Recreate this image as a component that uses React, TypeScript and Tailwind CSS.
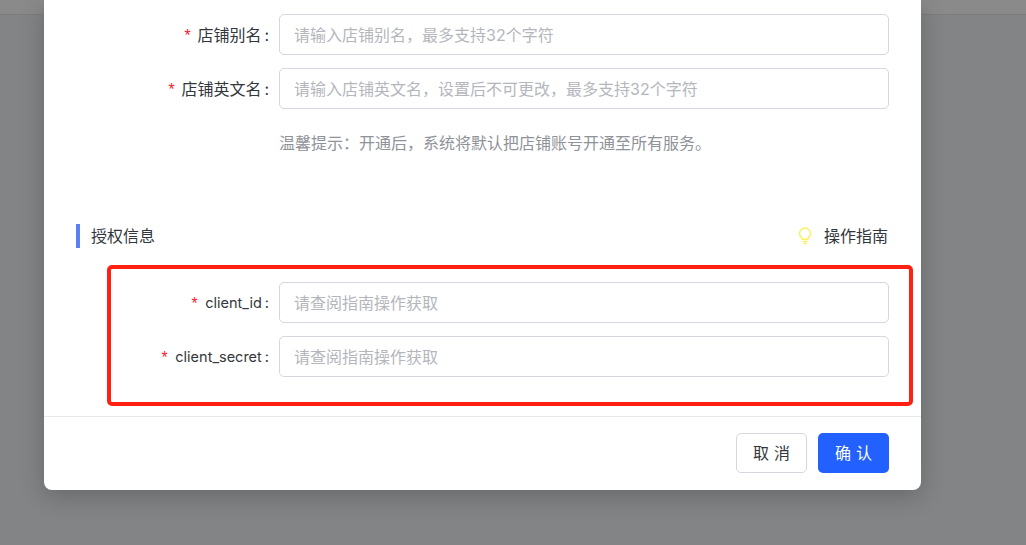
const font = "font-['Inter','Noto_Sans_CJK_SC',sans-serif]";

function Row({ label, placeholder, latin }: { label: string; placeholder: string; latin?: boolean }) {
  return (
    <div className="flex items-center h-[41px]">
      <label className={`w-[235px] shrink-0 flex justify-end items-center pr-[10px] text-[#33363c] whitespace-nowrap ${latin ? "text-[14.5px] pt-[1px]" : "text-base"}`}>
        <span className={`text-[#f5222d] text-base font-['Liberation_Mono',monospace] leading-none translate-y-[2px] ${latin ? "mr-[6px]" : "mr-[5px]"}`}>*</span>
        <span>{label}</span>
        <span className="ml-[3px]">:</span>
      </label>
      <div className="w-[610px] h-[41px] border border-[#d5d7e0] rounded-[5px] px-[14px] flex items-center text-base text-[#b4b6bc] whitespace-nowrap bg-white">
        {placeholder}
      </div>
    </div>
  );
}

export default function App() {
  return (
    <div className={`relative h-[545px] w-[1026px] overflow-hidden bg-[#838486] ${font}`}>
      <div className="h-[15px] bg-[#8a8a8a] border-b border-[#7c7c7c]" />
      <div className="absolute left-[44px] top-0 w-[877px] h-[490px] bg-white rounded-b-lg shadow-[0_6px_24px_rgba(0,0,0,0.22)] flex flex-col">
        <div className="flex-1 pt-[14px] pr-8">
          <div className="flex flex-col gap-[13px]">
            <Row label="店铺别名" placeholder="请输入店铺别名，最多支持32个字符" />
            <Row label="店铺英文名" placeholder="请输入店铺英文名，设置后不可更改，最多支持32个字符" />
          </div>
          <p className="ml-[235px] mt-[22px] text-base leading-6 text-[#8f9298]">
            温馨提示：开通后，系统将默认把店铺账号开通至所有服务。
          </p>
          <div className="mt-[69px] ml-8 flex items-center justify-between h-6">
            <div className="border-l-4 border-[#5b80f5] pl-[11px] h-6 flex items-center text-base text-[#33363c]">授权信息</div>
            <div className="flex items-center text-base text-[#33363c] mr-[1px]">
              <svg width="16" height="18" viewBox="0 0 16 18" fill="none" stroke="#fdf15a" strokeWidth="1.5" className="mr-[11px]">
                <path d="M5.3 12.2C5.2 10.9 2.5 9.6 2.5 6.6a5.5 5.5 0 0 1 11 0c0 3-2.7 4.3-2.8 5.6z" />
                <path d="M5.6 14.4h4.8M6.4 16.4h3.2" />
              </svg>
              操作指南
            </div>
          </div>
          <div className="mt-[34px] flex flex-col gap-[13px]">
            <Row latin label="client_id" placeholder="请查阅指南操作获取" />
            <Row latin label="client_secret" placeholder="请查阅指南操作获取" />
          </div>
        </div>
        <div className="h-[74px] border-t border-[#e8e8e8] flex items-start justify-end gap-[11px] pt-4 pr-8">
          <button className="w-[71px] h-10 rounded-[5px] border border-[#d5d7e0] bg-white text-base tracking-[5px] pl-[5px] pb-[1px] text-[#33363c]">取消</button>
          <button className="w-[71px] h-10 rounded-[5px] bg-[#2260ff] text-base tracking-[5px] pl-[5px] pb-[1px] text-white">确认</button>
        </div>
      </div>
      <div className="absolute left-[107px] top-[265px] w-[806px] h-[141px] border-4 border-[#ff2012] rounded-[5px]" />
    </div>
  );
}
